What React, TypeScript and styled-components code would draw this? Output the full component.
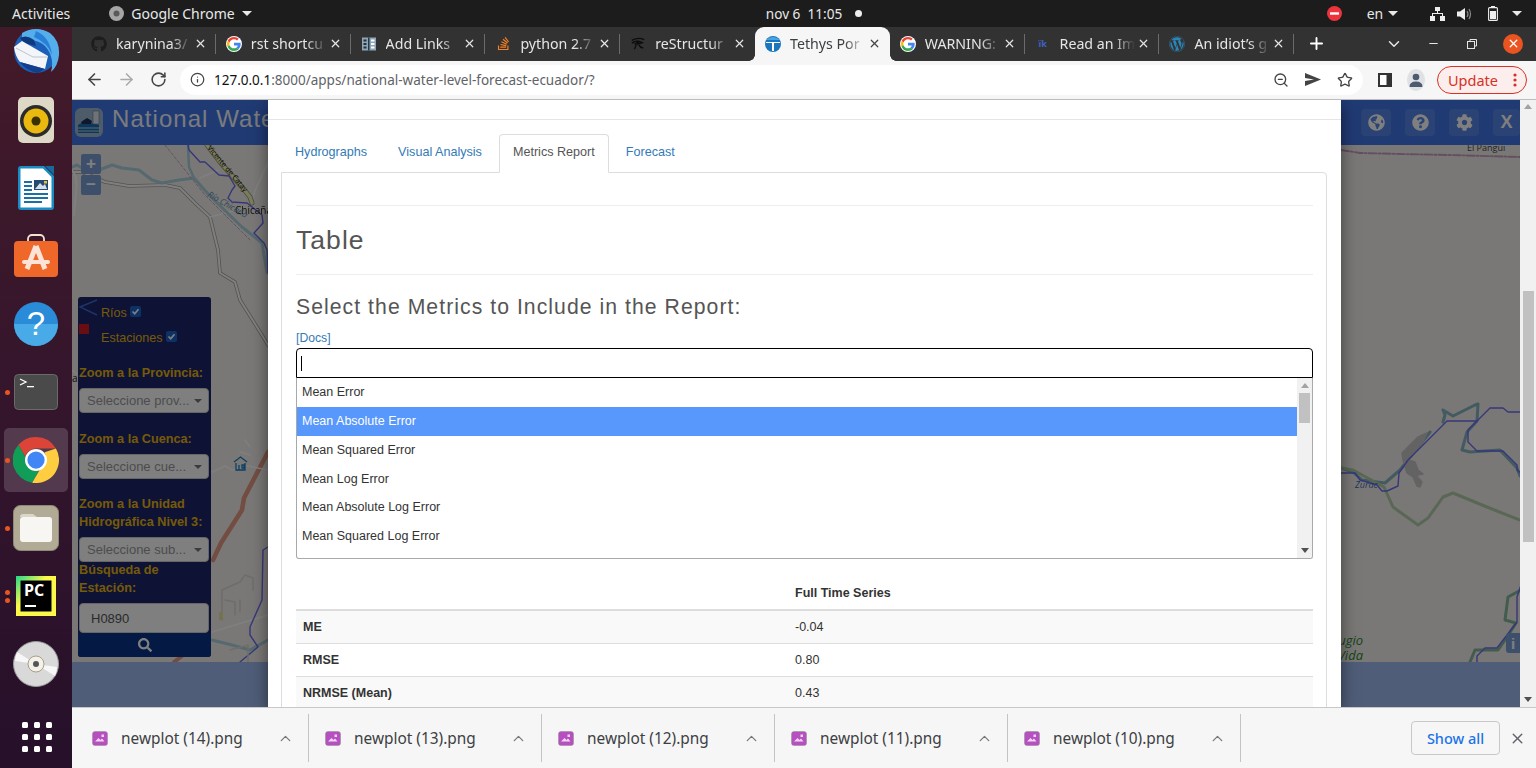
import React from "react";
import styled, { createGlobalStyle } from "styled-components";
import { ArrowLeft, ArrowRight, RotateCw, Info, ZoomOut, Star, ChevronUp, ChevronDown, X, Plus, Minus } from "lucide-react";
import { FaGithub, FaStackOverflow, FaWordpress, FaGlobeAmericas, FaQuestionCircle, FaCog, FaSearch } from "react-icons/fa";

const UI = `"Noto Sans", "Open Sans", sans-serif`;
const WEB = `"Liberation Sans", Arial, sans-serif`;

const Global = createGlobalStyle`
  html, body { margin: 0; padding: 0; overflow: hidden; background: #1c1c1c; }
  * { box-sizing: border-box; }
`;

const Screen = styled.div`
  width: 1536px; height: 768px; display: flex; flex-direction: column; overflow: hidden; font-family: ${UI};
`;

/* ---------- GNOME top bar ---------- */
const TopBar = styled.div`
  height: 27px; flex: none; background: #1c1c1c; color: #e8e8e8; display: grid;
  grid-template-columns: 1fr auto 1fr; align-items: center; font-size: 14px; padding: 0 9px 0 12px;
`;
const TopLeft = styled.div`display: flex; align-items: center;`;
const TopCenter = styled.div`display: flex; align-items: center; gap: 7px; margin-left: 89px; font-size: 13.6px;`;
const TopRight = styled.div`display: flex; align-items: center; justify-content: flex-end;`;
const AppMenu = styled.div`display: flex; align-items: center; margin-left: 39px; gap: 7px;`;
const Caret = styled.span<{ $ml?: number }>`
  display: inline-block; width: 0; height: 0; margin-left: ${p => p.$ml ?? 0}px;
  border-left: 5px solid transparent; border-right: 5px solid transparent; border-top: 5px solid #e8e8e8;
`;
const StatusDot = styled.span`width: 7px; height: 7px; border-radius: 50%; background: #eee; margin-left: 6px;`;
const TraySlot = styled.span<{ $w: number }>`display: inline-flex; width: ${p => p.$w}px; justify-content: center; align-items: center;`;

/* ---------- Dock ---------- */
const Desk = styled.div`flex: 1; display: flex; min-height: 0;`;
const Dock = styled.div`
  width: 72px; flex: none; display: flex; flex-direction: column; align-items: center;
  background: linear-gradient(180deg, #431a29 0%, #36162c 45%, #26102a 100%);
`;
const DockSlot = styled.div<{ $active?: boolean; $mt?: number }>`
  position: relative; width: 64px; height: ${p => (p.$active ? 64 : 68)}px; flex: none; display: flex; align-items: center; justify-content: center;
  margin: ${p => (p.$active ? "2px 0" : `${p.$mt ?? 0}px 0 0`)};
  border-radius: 5px; background: ${p => (p.$active ? "rgba(255,255,255,.16)" : "transparent")};
`;
const RunDot = styled.span<{ $top: number }>`
  position: absolute; left: 1px; top: ${p => p.$top}px; width: 5px; height: 5px; border-radius: 50%; background: #e95420;
`;

/* ---------- Chrome ---------- */
const Window = styled.div`flex: 1; min-width: 0; display: flex; flex-direction: column;`;
const TabStrip = styled.div`
  height: 34px; flex: none; background: #333233; display: flex; align-items: flex-end; padding-left: 9px; color: #e6e6e6;
`;
const BrowserTab = styled.div<{ $active?: boolean; $noSep?: boolean }>`
  position: relative; width: 134.800px; height: 34px; flex: none; display: flex; align-items: center; padding: 0 9px 1px 10px;
  font-size: 14.2px; border-radius: 9px 9px 0 0; background: ${p => (p.$active ? "#f6f6f6" : "transparent")};
  color: ${p => (p.$active ? "#3c4043" : "#e6e6e6")};
  &::after {
    content: ""; position: absolute; right: 0; top: 7px; height: 20px; width: 1px;
    background: ${p => (p.$noSep || p.$active ? "transparent" : "#6b6b6b")};
  }
`;
const TabFlare = styled.span<{ $side: "left" | "right" }>`
  position: absolute; bottom: 0; ${p => p.$side}: -6px; width: 6px; height: 6px;
  background: radial-gradient(circle at ${p => (p.$side === "left" ? "0 0" : "100% 0")}, transparent 5.500px, #f6f6f6 6px);
`;
const TabIcon = styled.span`width: 16px; height: 16px; flex: none; display: flex; align-items: center; justify-content: center; margin-right: 9px;`;
const TabTitle = styled.span`
  flex: 1; min-width: 0; overflow: hidden; white-space: nowrap;
  mask-image: linear-gradient(90deg, #000 72%, transparent 100%);
`;
const TabClose = styled.span`flex: none; display: flex; margin-left: 2px;`;
const StripControls = styled.div`flex: 1; display: flex; align-items: center; height: 34px; padding-bottom: 1px;`;
const StripSlot = styled.span<{ $w: number }>`width: ${p => p.$w}px; flex: none; display: flex; justify-content: center; align-items: center;`;
const CloseRound = styled.span`
  width: 20px; height: 20px; border-radius: 50%; background: #e95420; display: flex; align-items: center; justify-content: center;
`;

const Toolbar = styled.div`
  height: 39px; flex: none; background: #f6f6f6; border-bottom: 1px solid #bdbdbd; display: flex; align-items: center; padding: 0 9px 1px 0;
`;
const NavSlot = styled.span`width: 32px; display: flex; justify-content: center; align-items: center; flex: none;`;
const NavGroup = styled.div`display: flex; padding-left: 6px; width: 108px; flex: none;`;
const Omnibox = styled.div`
  width: 1183px; height: 30px; flex: none; border-radius: 15px; background: #fff; display: flex; align-items: center; padding: 0 2px 0 10px;
  font-size: 13.5px; color: #5f6368;
`;
const UrlHost = styled.span`color: #111;`;
const UrlText = styled.span`margin-left: 9px; flex: 1; white-space: nowrap;`;
const OmniSlot = styled.span`width: 32px; display: flex; justify-content: center; flex: none;`;
const Avatar = styled.span`
  width: 22px; height: 22px; border-radius: 50%; background: #dfe1e5; display: flex; align-items: center; justify-content: center; overflow: hidden;
`;
const UpdatePill = styled.div`
  width: 91px; height: 28px; border-radius: 14px; border: 1px solid #d93025; background: #fbeeed; color: #d93025;
  display: flex; align-items: center; justify-content: space-between; padding: 0 9px 0 10px; font-size: 14.5px;
`;
const ToolSlot = styled.span<{ $w: number }>`width: ${p => p.$w}px; flex: none; display: flex; justify-content: center;`;
const ToolGap = styled.span`width: 12px; flex: none;`;

/* ---------- Viewport ---------- */
const Viewport = styled.div`flex: 1; min-height: 0; display: flex;`;
const Page = styled.div`position: relative; flex: 1; min-width: 0; display: flex; flex-direction: column; overflow: hidden; font-family: ${WEB};`;
const AppHeader = styled.div`
  height: 45px; flex: none; background: #4075e6; display: flex; align-items: center; color: #fff; padding-left: 3px;
`;
const AppTitle = styled.div`font-size: 24px; letter-spacing: 1.05px; margin: -8px 0 0 9px; flex: 1; white-space: nowrap; color: #f4f6fb;`;
const HeaderButtons = styled.div`display: flex; gap: 14px;`;
const HeaderButton = styled.div<{ $w?: number }>`
  width: ${p => p.$w ?? 30}px; height: 27px; border-radius: 4px; background: rgba(255,255,255,.12); display: flex; align-items: center; justify-content: center;
  color: #fff; font-size: 18px; font-weight: bold;
`;
const MapArea = styled.div`position: relative; height: 517px; flex: none; background: #f4f1ec; overflow: hidden;`;
const MapSvg = styled.svg`display: block; width: 100%; height: 100%;`;
const AppFooter = styled.div`flex: 1; background: #9fbaf0;`;
const ZoomControl = styled.div`position: absolute; left: 9px; top: 9px; width: 20px; display: flex; flex-direction: column; gap: 1px;`;
const ZoomBtn = styled.div`
  height: 20px; background: #7c9fd8; color: #fff; font-size: 17px; font-weight: bold; display: flex; align-items: center; justify-content: center;
  border-radius: 2px;
`;
const InfoBtn = styled.div`
  position: absolute; right: 0; top: 488px; width: 14px; height: 20px; background: #7c9fd8; color: #fff; font-size: 15px; font-weight: bold;
  border-radius: 3px 0 0 3px; display: flex; align-items: center; justify-content: center;
`;

/* legend */
const Legend = styled.div`
  position: absolute; left: 6px; top: 152px; width: 133px; height: 360px; background: #1c2468; border-radius: 3px; padding: 3px 1px 0;
  display: flex; flex-direction: column; overflow: hidden; color: #e8b512;
`;
const LegendRow = styled.div`display: flex; align-items: center; height: 25px; font-size: 12.6px;`;
const LegendSwatch = styled.span`width: 22px; flex: none; display: flex; align-items: flex-start; height: 25px; margin-top: -2px;`;
const LegendName = styled.span`margin: 0 3px 0 0;`;
const Check = styled.span`
  width: 11px; height: 11px; background: #1a63c9; border-radius: 2px; display: inline-flex; align-items: center; justify-content: center; margin-top: -3px;
`;
const FieldLabel = styled.div<{ $mt: number }>`
  font-size: 12.7px; font-weight: bold; line-height: 18px; margin-top: ${p => p.$mt}px; color: #e8b512;
`;
const FakeSelect = styled.div<{ $mt: number }>`
  width: 130px; height: 25px; margin-top: ${p => p.$mt}px; flex: none; background: #fff; border: 1px solid #ccc; border-radius: 4px; color: #999; font-size: 13px;
  display: flex; align-items: center; justify-content: space-between; padding: 0 6px 0 7px;
`;
const SelectCaret = styled.span`
  width: 0; height: 0; border-left: 4px solid transparent; border-right: 4px solid transparent; border-top: 4px solid #777;
`;
const StationInput = styled.div`
  width: 130px; height: 30px; margin-top: 6px; flex: none; background: #fff; border-radius: 4px; border: 1px solid #ccc; color: #555; font-size: 13px;
  display: flex; align-items: center; padding-left: 11px;
`;
const SearchBar = styled.div`
  flex: 1; margin: 0 -1px; background: #08358a; display: flex; align-items: center; justify-content: center; color: #fff;
`;

const Backdrop = styled.div`position: absolute; inset: 0; background: rgba(0,0,0,.5);`;

/* ---------- modal ---------- */
const Modal = styled.div`
  position: absolute; left: 196px; top: 0; bottom: 0; width: 1073px; background: #fff; box-shadow: 0 5px 15px rgba(0,0,0,.5);
  overflow: hidden; color: #333; font-size: 13px;
`;
const ModalTop = styled.div`height: 20px; border-bottom: 1px solid #e5e5e5;`;
const ModalBody = styled.div`padding: 14px 14px 0 13px;`;
const NavTabs = styled.div`display: flex; height: 38px; position: relative; z-index: 1;`;
const NavTab = styled.div<{ $active?: boolean }>`
  height: ${p => (p.$active ? 39 : 38)}px; padding: 0 13px ${p => (p.$active ? 3 : 2)}px; margin-right: 3px; display: flex; align-items: center; font-size: 12.6px; border-radius: 4px 4px 0 0;
  border: 1px solid ${p => (p.$active ? "#ddd" : "transparent")}; border-bottom-color: ${p => (p.$active ? "#fff" : "transparent")};
  background: ${p => (p.$active ? "#fff" : "transparent")};
  color: ${p => (p.$active ? "#555" : "#337ab7")};
`;
const TabPanel = styled.div`border: 1px solid #ddd; border-radius: 0 4px 0 0; padding: 0 13px 0 14px; width: 1046px; height: 560px;`;
const Rule = styled.div<{ $mt: number }>`height: 1px; background: #eee; margin-top: ${p => p.$mt}px;`;
const TableTitle = styled.h2`
  margin: 17px 0 16px; font-size: 26.500px; line-height: 35px; font-weight: 400; letter-spacing: 1.05px; color: #555;
`;
const SubTitle = styled.h3`
  margin: 20px 0 0; font-size: 21.200px; line-height: 24px; font-weight: 400; letter-spacing: 1.05px; color: #555;
`;
const DocsLink = styled.div`margin-top: 12px; height: 17px; font-size: 12.2px; line-height: 15px; color: #337ab7;`;
const MultiInput = styled.div`
  height: 30px; border: 1.5px solid #000; border-radius: 4px 4px 0 0; display: flex; align-items: center; padding-left: 4px; background: #fff;
`;
const TextCaret = styled.span`width: 1px; height: 15px; background: #000;`;
const ListBox = styled.div`
  height: 181px; border: 1px solid #a9a9a9; border-top: none; border-radius: 0 0 3px 3px; display: flex; overflow: hidden;
`;
const Options = styled.div`flex: 1; min-width: 0;`;
const OptionRow = styled.div<{ $hl?: boolean }>`
  height: ${p => (p.$hl ? 29 : 28.700)}px; display: flex; align-items: center; padding-left: 5px; font-size: 12.5px;
  background: ${p => (p.$hl ? "#5897fb" : "transparent")}; color: ${p => (p.$hl ? "#fff" : "#333")};
`;
const ScrollTrack = styled.div<{ $w: number }>`
  width: ${p => p.$w}px; flex: none; background: #f1f1f1; display: flex; flex-direction: column; align-items: center;
`;
const ArrowUp = styled.span<{ $mt: number }>`
  width: 0; height: 0; margin-top: ${p => p.$mt}px; border-left: 4px solid transparent; border-right: 4px solid transparent; border-bottom: 5px solid #a3a3a3; flex: none;
`;
const ArrowDown = styled.span<{ $mb: number }>`
  width: 0; height: 0; margin-top: auto; margin-bottom: ${p => p.$mb}px; border-left: 4px solid transparent; border-right: 4px solid transparent; border-top: 5px solid #505050; flex: none;
`;
const Thumb = styled.span<{ $w: number; $h: number; $mt: number }>`
  width: ${p => p.$w}px; height: ${p => p.$h}px; margin-top: ${p => p.$mt}px; background: #c1c1c1; flex: none;
`;
const Metrics = styled.table`
  width: 100%; border-collapse: collapse; margin-top: 17px; font-size: 12.5px; color: #333; table-layout: fixed;
`;
const HeadCell = styled.th`
  text-align: left; padding: 0 7px; height: 34px; font-weight: bold; border-bottom: 2px solid #ddd;
`;
const Row = styled.tr<{ $odd?: boolean }>`background: ${p => (p.$odd ? "#f9f9f9" : "#fff")};`;
const LabelCell = styled.td`padding: 0 7px; height: 33px; font-weight: bold; border-bottom: 1px solid #ddd;`;
const ValueCell = styled.td`padding: 0 7px; height: 33px; border-bottom: 1px solid #ddd;`;

/* ---------- downloads ---------- */
const DownloadBar = styled.div`
  height: 61px; flex: none; background: #f6f6f6; border-top: 1px solid #c8c8c8; display: flex; align-items: center; padding-left: 4px;
`;
const DownloadItem = styled.div`
  width: 233px; height: 48px; flex: none; border-right: 1px solid #c4c4c4; display: flex; align-items: center; padding-left: 16px; font-size: 15.4px; color: #3c4043;
`;
const FileName = styled.span`margin-left: 13px; flex: 1; white-space: nowrap;`;
const DownloadChevron = styled.span`display: flex; margin-right: 14px;`;
const ShowAll = styled.div`
  margin-left: auto; width: 89px; height: 34px; border: 1px solid #c8c8c8; border-radius: 4px; color: #1a73e8; font-size: 14.5px; font-weight: 500;
  display: flex; align-items: center; justify-content: center;
`;
const BarClose = styled.span`width: 36px; display: flex; justify-content: center; flex: none; padding-right: 1px;`;

/* ---------- icons ---------- */
const GoogleG = () => (
  <svg width="16" height="16" viewBox="0 0 48 48">
    <circle cx="24" cy="24" r="24" fill="#fff" />
    <path fill="#EA4335" d="M24 10c3.600 0 6.600 1.300 9 3.500l5-5C34.800 5.400 29.800 3 24 3 15.500 3 8.300 7.800 4.800 14.900l5.900 4.600C12.300 14 17.700 10 24 10z" />
    <path fill="#4285F4" d="M44 24.500c0-1.500-.1-2.600-.4-4H24v8h11.300c-.5 2.700-2 5-4.300 6.500l5.700 4.400C41.500 36 44 30.800 44 24.500z" />
    <path fill="#FBBC05" d="M10.700 28.500A12.600 12.600 0 0 1 10 24c0-1.600.3-3.100.7-4.500l-5.900-4.600A21 21 0 0 0 3 24c0 3.300.8 6.400 1.800 9.100l5.900-4.600z" />
    <path fill="#34A853" d="M24 45c5.700 0 10.500-1.900 14-5.100L31 35c-1.800 1.300-4.100 2-7 2-6.300 0-11.700-4-13.300-9.500l-5.900 4.600C8.300 40.200 15.500 45 24 45z" />
  </svg>
);
const BookIcon = () => (
  <svg width="16" height="16" viewBox="0 0 16 16">
    <rect x="1" y="1.500" width="14" height="13" fill="#8fa6b8" />
    <rect x="7" y="1.500" width="1.500" height="13" fill="#22394a" />
    <rect x="2.500" y="3.500" width="3" height="2" fill="#25323c" /><rect x="2.500" y="7" width="3" height="2" fill="#25323c" /><rect x="2.500" y="10.500" width="3" height="2" fill="#25323c" />
    <rect x="10" y="3.500" width="3.500" height="2" fill="#fff" /><rect x="10" y="7" width="3.500" height="2" fill="#fff" /><rect x="10" y="10.500" width="3.500" height="2" fill="#fff" />
  </svg>
);
const HorusIcon = () => (
  <svg width="18" height="14" viewBox="0 0 18 14" fill="none" stroke="#0d0d0d" strokeWidth="1.500">
    <path d="M2 3 Q9 -1 16 2" /><path d="M2 6 Q8 2 14 5.500 Q9 8 5 6.500" /><path d="M7 8 L5 13" /><path d="M10 8 Q12 12 15 11" />
    <circle cx="9" cy="5" r="1.200" fill="#0d0d0d" />
  </svg>
);
const TethysIcon = () => (
  <svg width="16" height="16" viewBox="0 0 16 16">
    <circle cx="8" cy="8" r="8" fill="#1b76bb" />
    <path d="M1 6 H15 V7 H9 V15 H7 V7 H1 Z" fill="#fff" />
    <path d="M2 3 Q8 -1 14 3 L14 4 H2Z" fill="#4aa3df" />
  </svg>
);
const ChromeIcon = ({ s }: { s: number }) => (
  <svg width={s} height={s} viewBox="0 0 48 48">
    <path fill="#db4437" d="M24 0a24 24 0 0 1 20.800 12H24a12 12 0 0 0-11.400 8.300L5.600 8.100A24 24 0 0 1 24 0z" />
    <path fill="#0f9d58" d="M5.600 8.100 L16.500 27 A12 12 0 0 0 27 35.600 L20 47.700 A24 24 0 0 1 5.600 8.100z" />
    <path fill="#ffcd40" d="M44.800 12 A24 24 0 0 1 20 47.700 L31 29 A12 12 0 0 0 33 16 Z" />
    <circle cx="24" cy="24" r="11.500" fill="#fff" /><circle cx="24" cy="24" r="9" fill="#4285f4" />
  </svg>
);
const FileIcon = () => (
  <svg width="16" height="15" viewBox="0 0 16 15">
    <rect x=".5" y=".5" width="15" height="14" rx="2.500" fill="#b64fc0" stroke="#8c8c8c" strokeWidth=".5" />
    <path d="M3 10.500 L6.500 7 L8.500 9 L10 7.500 L12.500 10.500Z" fill="#f2d7f5" /><rect x="9.500" y="3.500" width="2.500" height="2.500" fill="#f2d7f5" />
  </svg>
);
const CheckMark = () => (
  <svg width="9" height="9" viewBox="0 0 9 9"><path d="M1.500 4.500 L3.700 6.800 L7.500 2.200" fill="none" stroke="#fff" strokeWidth="1.700" /></svg>
);
const Thunderbird = () => (
  <svg width="48" height="46" viewBox="0 0 48 46">
    <circle cx="24" cy="22" r="22" fill="#1b5fb8" />
    <path d="M10 4 Q24 -4 38 4 Q48 12 47 26 Q46 37 39 43 Q43 28 33 17 Q25 9 10 12Z" fill="#55aeec" />
    <path d="M24 2 Q38 8 40 26 Q36 14 22 8Z" fill="#2a7fd6" />
    <path d="M8 9 Q15 5 22 11 L24 17 L12 14Z" fill="#0d3a7e" />
    <path d="M2 18 L10 12 L36 27 L33 40 L8 33 Q3 27 2 18Z" fill="#f4f5f8" />
    <path d="M4 19 L21 28 L35 28" fill="none" stroke="#bcc3d1" strokeWidth="1" />
    <path d="M8 33 L33 40 L26 44 Q14 42 8 33Z" fill="#123f8c" />
  </svg>
);
const Rhythmbox = () => (
  <svg width="36" height="46" viewBox="0 0 36 46">
    <rect x="0" y="0" width="36" height="46" rx="5" fill="#ded9c6" /><circle cx="18" cy="24" r="16" fill="#2b2b2b" /><circle cx="18" cy="24" r="12.500" fill="#e9b90f" /><circle cx="18" cy="24" r="4.500" fill="#3a3000" />
  </svg>
);
const Writer = () => (
  <svg width="38" height="46" viewBox="0 0 38 46">
    <path d="M4 1 H27 L37 11 V42 a3 3 0 0 1-3 3 H4 a3 3 0 0 1-3-3 V4 a3 3 0 0 1 3-3z" fill="#1a8cc4" />
    <path d="M3.500 3.500 H26 L34.500 12 V42.500 H3.500Z" fill="#fff" />
    <path d="M28 1 L37 1 L37 10Z" fill="#146b9c" />
    <g fill="#1a6fa6"><rect x="7" y="16" width="8" height="2" /><rect x="7" y="20" width="8" height="2" /><rect x="7" y="24" width="8" height="2" /><rect x="7" y="28" width="24" height="2" /><rect x="7" y="32" width="24" height="2" /><rect x="7" y="36" width="18" height="2" /></g>
    <rect x="17" y="15" width="14" height="10" fill="#244b70" /><path d="M18 24 L23 18 L26 21 L28 19 L30 24Z" fill="#d8dfe6" /><rect x="27" y="16" width="3" height="2.500" fill="#f0c030" />
  </svg>
);
const Software = () => (
  <svg width="46" height="44" viewBox="0 0 46 44">
    <path d="M15 10 V5 a4 4 0 0 1 4-4 h8 a4 4 0 0 1 4 4 V10" fill="none" stroke="#f1e5cf" strokeWidth="1.800" />
    <rect x="1" y="7" width="44" height="36" rx="4" fill="#f0672a" />
    <path d="M23 12 L14 35 M23 12 L32 35" stroke="#fbe3d8" strokeWidth="5" />
    <rect x="9" y="26" width="28" height="4" rx="2" fill="#fbe3d8" />
  </svg>
);
const HelpIcon = () => (
  <svg width="46" height="46" viewBox="0 0 46 46">
    <circle cx="23" cy="23" r="22" fill="#2a8bd8" /><path d="M1 23a22 22 0 0 0 44 0Z" fill="#49aae8" />
    <text x="23" y="34" textAnchor="middle" fontSize="33" fontFamily="Liberation Sans" fill="#fff">?</text>
  </svg>
);
const Terminal = () => (
  <svg width="44" height="36" viewBox="0 0 44 36">
    <rect x=".5" y=".5" width="43" height="35" rx="4" fill="#4a4a4a" stroke="#6a6a6a" />
    <path d="M6 5 L12 8 L6 11" fill="none" stroke="#fff" strokeWidth="1.300" /><rect x="13" y="12" width="7" height="1.300" fill="#fff" />
  </svg>
);
const Files = () => (
  <svg width="46" height="46" viewBox="0 0 46 46">
    <rect x=".5" y=".5" width="45" height="45" rx="7" fill="#b1ab96" stroke="#8d8877" />
    <path d="M7 12 a3 3 0 0 1 3-3 H20 L24 12 Z" fill="#dad6c9" />
    <rect x="7" y="12" width="32" height="25" rx="3" fill="#f7f6f3" />
  </svg>
);
const PyCharm = () => (
  <svg width="40" height="40" viewBox="0 0 40 40">
    <defs><linearGradient id="pc" x1="0" y1="0" x2="1" y2="1"><stop offset="0" stopColor="#21d789" /><stop offset=".4" stopColor="#fcf84a" /><stop offset="1" stopColor="#fcf84a" /></linearGradient></defs>
    <rect width="40" height="40" fill="url(#pc)" /><rect x="4.500" y="4.500" width="31" height="31" fill="#000" />
    <text x="8" y="20" fontFamily="Open Sans" fontWeight="700" fontSize="16" fill="#fff">PC</text>
    <rect x="9" y="29" width="11" height="2" fill="#fff" />
  </svg>
);
const Disc = () => (
  <svg width="46" height="46" viewBox="0 0 46 46">
    <circle cx="23" cy="23" r="22.500" fill="#d9d9d9" stroke="#9a9a9a" />
    <path d="M23 23 L4 11 A22 22 0 0 0 2 20Z M23 23 L42 35 A22 22 0 0 0 44 26Z" fill="#f7f7f7" />
    <circle cx="23" cy="23" r="8" fill="#f3f1e9" stroke="#a79f88" /><circle cx="23" cy="23" r="3" fill="#555" />
  </svg>
);
const AppGrid = () => (
  <svg width="32" height="32" viewBox="0 0 32 32" fill="#fff">
    {[2, 14, 26].flatMap(y => [2, 14, 26].map(x => <rect key={`${x}-${y}`} x={x} y={y} width="6" height="6" rx="1.500" />))}
  </svg>
);
const NoEntry = () => (
  <svg width="15" height="15" viewBox="0 0 15 15"><circle cx="7.500" cy="7.500" r="7.500" fill="#ed333b" /><rect x="3" y="6.300" width="9" height="2.400" fill="#fff" /></svg>
);
const Network = () => (
  <svg width="15" height="14" viewBox="0 0 15 14" fill="#eee"><rect x="5" y="0" width="5" height="4" /><rect x="0" y="9" width="5" height="5" /><rect x="10" y="9" width="5" height="5" /><path d="M7 4 h1 v2 h5 v3 h-1 v-2 H3 v2 H2 V6 h5Z" /></svg>
);
const Volume = () => (
  <svg width="16" height="14" viewBox="0 0 16 14"><path d="M0 4.500 H3 L8 1 V13 L3 9.500 H0Z" fill="#eee" /><path d="M10 4 Q12 7 10 10 M12 2 Q15 7 12 12" fill="none" stroke="#8a8a8a" strokeWidth="1.200" /></svg>
);
const Battery = () => (
  <svg width="10" height="15" viewBox="0 0 10 15"><rect x="3" y="0" width="4" height="2" fill="#eee" /><rect x=".6" y="1.600" width="8.800" height="12.800" rx="1" fill="none" stroke="#eee" strokeWidth="1.100" /><rect x="2" y="5" width="6" height="8" fill="#eee" /></svg>
);
const TinyMark = styled.span`font-size: 9px; color: #3f62c0; font-weight: 700;`;

const tabs = [
  { t: "karynina3/", i: <FaGithub size={16} color="#1d1d1d" /> },
  { t: "rst shortcu", i: <GoogleG /> },
  { t: "Add Links", i: <BookIcon /> },
  { t: "python 2.7", i: <FaStackOverflow size={15} color="#f48024" /> },
  { t: "reStructur", i: <HorusIcon />, noSep: true },
  { t: "Tethys Por", i: <TethysIcon />, active: true },
  { t: "WARNING:", i: <GoogleG /> },
  { t: "Read an Im", i: <TinyMark>ïk</TinyMark> },
  { t: "An idiot’s g", i: <FaWordpress size={16} color="#2a86b8" /> },
];

const Map = () => (
  <MapSvg viewBox="72 145 1448 517" fill="none">
    {/* left */}
    <g strokeLinejoin="round" strokeLinecap="round">
      <path d="M72 172 L82 172 L105 182 L129 186 L165 185 L180 188 L195 203 L210 217 L218 250 L220 273 L235 282 L240 300 L262 335 L268 345" stroke="#a9a6a0" strokeWidth="3.600" />
      <path d="M72 172 L82 172 L105 182 L129 186 L165 185 L180 188 L195 203 L210 217 L218 250 L220 273 L235 282 L240 300 L262 335 L268 345" stroke="#fff" strokeWidth="2" />
      <path d="M210 217 L245 208 M268 163 L256 188 L252 200 M200 178 L218 170" stroke="#fff" strokeWidth="1.600" />
      <path d="M72 170 Q78 178 76 192 L74 215" stroke="#fff" strokeWidth="2" />
      <path d="M207 145 L220 162 L242 187 L250 197 L252 203" stroke="#9b9a70" strokeWidth="5" />
      <path d="M207 145 L220 162 L242 187 L250 197 L252 203" stroke="#f7fabf" strokeWidth="3.400" />
      <path d="M72 167 L77 165 L82 168 L99 170 L112 165 L122 168 L139 170 L152 180 L162 183 L179 180 L194 178 L209 195 L242 227 L262 243 L267 273" stroke="#aad3df" strokeWidth="3" />
      <path d="M188 145 L189 167 L194 178" stroke="#aad3df" strokeWidth="2.600" />
      <path d="M188 145 L189 150 L200 162 L205 162 L219 175 L229 176 L235 186 L232 190 L228 198 L232 202 L247 203 L262 215 L263 223 L254 233 L264 243 L267 250 L268 273" stroke="#6c6cf4" strokeWidth="1.400" />
      <path d="M165 145 L205 195 L225 215 L250 240" stroke="#c8a8c0" strokeWidth="1" strokeDasharray="3 2" />
      <path d="M213 560 L221 543 L242 510 L244 498 L268 452" stroke="#e79a84" strokeWidth="4.600" />
      <path d="M174 662 L182 656" stroke="#e79a84" strokeWidth="4" />
      <path d="M212 472 L225 466 L232 470 L248 466 L268 470" stroke="#fff" strokeWidth="1.600" />
      <path d="M212 640 L232 645 L250 650 L268 640" stroke="#aad3df" strokeWidth="3" />
      <path d="M212 632 L268 615" stroke="#fff" strokeWidth="1.600" />
      <path d="M268 547 L263 550 L262 600 L250 627 L250 635 L258 647 L240 662" stroke="#6c6cf4" strokeWidth="1.400" />
      <path d="M222 620 V590 L240 582 L245 575 L253 578 V590 M225 600 L235 602 V615 M240 600 V612 M230 650 L248 645 L248 662" stroke="#dcdad4" strokeWidth="1.600" />
      <rect x="219" y="612" width="4" height="8" fill="#e8e7a0" stroke="none" />
      <path d="M72 370 l5 4 M245 440 L250 447 M240 452 L250 455" stroke="#fff" strokeWidth="1.400" />
    </g>
    <text x="235" y="214" fontFamily="Open Sans" fontSize="10" fill="#000" opacity=".9">Chicaña</text>
    <text x="207" y="148" fontFamily="Open Sans" fontSize="7.500" fill="#111" transform="rotate(50 207 148)">Vicente de Catay</text>
    <text x="207" y="196" fontFamily="Open Sans" fontSize="8.500" fontStyle="italic" fill="#5d8fb0" transform="rotate(30 207 196)">Río Chicaña</text>
    <text x="72" y="382" fontFamily="Open Sans" fontSize="10" fill="#222">a</text>
    <g transform="translate(234 456)" stroke="#1a7fc0" strokeWidth="1.300"><path d="M0 6 L6.500 1 L13 6" /><path d="M2 7 V14 H11 V7 M5 9 V14 M8 9 H10 V12 H8Z" /></g>

    {/* right */}
    <g strokeLinejoin="round" strokeLinecap="round">
      <path d="M1341 150 L1360 153 L1400 154 L1450 155 L1520 157" stroke="#c49fc0" strokeWidth="1.900" strokeDasharray="8 2 2 2" />
      <path d="M1341 468 L1353 472 L1362 480 L1385 483 L1400 470 L1430 432 M1443 422 L1445 415 L1443 410 L1453 416 L1465 410 L1475 405 L1478 404 L1477 421 L1467 432 L1462 450 L1470 452 L1500 450 L1517 468 L1520 476" stroke="#86b4c2" strokeWidth="3" />
      <path d="M1402 453 L1418 437 L1427 433 L1423 442 L1408 460 L1415 462 L1418 470 L1423 474 L1418 475 L1414 473 L1422 482 L1420 487 L1417 486 L1413 477 L1407 473 L1403 460Z" fill="#c6c6c6" stroke="#c6c6c6" strokeWidth="1.500" />
      <path d="M1341 468 L1353 470 L1384 487 L1393 507 L1418 525 L1428 518 L1443 497 L1453 493 L1487 507 L1520 520" stroke="#b2ceaa" strokeWidth="3" />
      <path d="M1341 473 H1355 L1360 480 L1377 485 L1382 491 L1387 491 L1398 486 L1399 473 L1408 460 L1447 421 H1477 L1490 408 H1503 L1508 412 H1521" stroke="#6c6cf4" strokeWidth="1.400" />
      <path d="M1477 421 L1468 430 V442 L1477 451 H1503 L1517 465 V470 L1521 473" stroke="#6c6cf4" strokeWidth="1.400" />
      <path d="M1521 590 L1508 597 L1505 620 L1516 623 L1505 640 L1498 650 L1475 650 L1470 662" stroke="#84b89a" strokeWidth="3" />
      <path d="M1521 585 L1517 597 V622 L1497 648 H1485 L1477 656 V662" stroke="#6c6cf4" strokeWidth="1.400" />
    </g>
    <text x="1467" y="151" fontFamily="Open Sans" fontSize="9" fill="#444">El Pangui</text>
    <text x="1355" y="488" fontFamily="Open Sans" fontSize="9" fontStyle="italic" fill="#3f6db0">Zurac</text>
    <text x="1363" y="645" textAnchor="end" fontFamily="Open Sans" fontSize="13" fontStyle="italic" fill="#2c8a2c">Refugio</text>
    <text x="1363" y="660" textAnchor="end" fontFamily="Open Sans" fontSize="13" fontStyle="italic" fill="#2c8a2c">de Vida</text>
  </MapSvg>
);

const Logo = () => (
  <svg width="28" height="29" viewBox="0 0 28 29">
    <rect width="28" height="29" rx="6" fill="#9db6d2" />
    <path d="M3 17 Q8 13 13 16 L19 15 L24 17 V25 H3Z" fill="#1c6db2" />
    <path d="M6 14 L12 10 L17 13 L16 16 H7Z" fill="#1a2f5c" />
    <rect x="18" y="3" width="6" height="13" fill="#dfe6ef" stroke="#5c7fa8" strokeWidth=".6" />
    <path d="M3 20 H25 M3 23 H25" stroke="#e6eef6" strokeWidth=".8" />
  </svg>
);

export default function App() {
  return (
    <Screen>
      <Global />
      <TopBar>
        <TopLeft>
          Activities
          <AppMenu>
            <svg width="15" height="15" viewBox="0 0 15 15"><circle cx="7.500" cy="7.500" r="7.500" fill="#a6a6a6" /><circle cx="7.500" cy="7.500" r="3" fill="#5a5a5a" /></svg>
            Google Chrome<Caret $ml={0} />
          </AppMenu>
        </TopLeft>
        <TopCenter>
          <span>nov 6&nbsp; 11:05</span><StatusDot />
        </TopCenter>
        <TopRight>
          <NoEntry />
          <TraySlot $w={81}>en<Caret $ml={5} /></TraySlot>
          <TraySlot $w={28}><Network /></TraySlot>
          <TraySlot $w={28}><Volume /></TraySlot>
          <TraySlot $w={28}><Battery /></TraySlot>
          <TraySlot $w={20}><Caret /></TraySlot>
        </TopRight>
      </TopBar>
      <Desk>
        <Dock>
          <DockSlot $mt={-9}><Thunderbird /></DockSlot>
          <DockSlot><Rhythmbox /></DockSlot>
          <DockSlot><Writer /></DockSlot>
          <DockSlot><Software /></DockSlot>
          <DockSlot><HelpIcon /></DockSlot>
          <DockSlot><RunDot $top={32} /><Terminal /></DockSlot>
          <DockSlot $active><RunDot $top={30} /><ChromeIcon s={46} /></DockSlot>
          <DockSlot><RunDot $top={32} /><Files /></DockSlot>
          <DockSlot><RunDot $top={28} /><RunDot $top={36} /><PyCharm /></DockSlot>
          <DockSlot><Disc /></DockSlot>
          <DockSlot $mt={4}><AppGrid /></DockSlot>
        </Dock>
        <Window>
          <TabStrip>
            {tabs.map(t => (
              <BrowserTab key={t.t} $active={t.active} $noSep={t.noSep}>
                {t.active && <TabFlare $side="left" />}
                {t.active && <TabFlare $side="right" />}
                <TabIcon>{t.i}</TabIcon>
                <TabTitle>{t.t}</TabTitle>
                <TabClose><X size={13} strokeWidth={2.200} color={t.active ? "#444" : "#e6e6e6"} /></TabClose>
              </BrowserTab>
            ))}
            <StripControls>
              <StripSlot $w={44}><Plus size={19} strokeWidth={2.400} color="#fff" /></StripSlot>
              <StripSlot $w={38} />
              <StripSlot $w={36}><ChevronDown size={18} color="#e6e6e6" /></StripSlot>
              <StripSlot $w={42}><Minus size={13} color="#e6e6e6" /></StripSlot>
              <StripSlot $w={36}>
                <svg width="10" height="10" viewBox="0 0 10 10" fill="none" stroke="#e6e6e6"><rect x=".5" y="2.500" width="7" height="7" /><path d="M3 2.500 V.5 H9.500 V7 H7.500" /></svg>
              </StripSlot>
              <StripSlot $w={46}><CloseRound><X size={13} strokeWidth={2.400} color="#fff" /></CloseRound></StripSlot>
            </StripControls>
          </TabStrip>
          <Toolbar>
            <NavGroup>
              <NavSlot><ArrowLeft size={19} strokeWidth={2} color="#444" /></NavSlot>
              <NavSlot><ArrowRight size={19} strokeWidth={2} color="#aaa" /></NavSlot>
              <NavSlot><RotateCw size={17} strokeWidth={2.200} color="#444" /></NavSlot>
            </NavGroup>
            <Omnibox>
              <Info size={15} strokeWidth={2} color="#444" />
              <UrlText><UrlHost>127.0.0.1</UrlHost>:8000/apps/national-water-level-forecast-ecuador/?</UrlText>
              <OmniSlot><ZoomOut size={16} strokeWidth={2} color="#444" /></OmniSlot>
              <OmniSlot>
                <svg width="16" height="13" viewBox="0 0 16 13"><path d="M0 0 L16 6.500 L0 13 L0 8 L9 6.500 L0 5Z" fill="#444" /></svg>
              </OmniSlot>
              <OmniSlot><Star size={16} strokeWidth={2} color="#444" /></OmniSlot>
            </Omnibox>
            <ToolSlot $w={44}>
              <svg width="14" height="14" viewBox="0 0 14 14"><rect x="1" y="1" width="12" height="12" fill="#fff" stroke="#333" strokeWidth="2" /><rect x="8.500" y="1" width="5" height="12" fill="#333" /></svg>
            </ToolSlot>
            <ToolSlot $w={18}><Avatar>
              <svg width="16" height="16" viewBox="0 0 16 16" fill="#4c5a70"><circle cx="8" cy="5" r="3.300" /><path d="M1.500 15 Q1.500 9.500 8 9.500 Q14.500 9.500 14.500 15Z" /></svg>
            </Avatar></ToolSlot>
            <ToolGap />
            <UpdatePill>Update
              <svg width="4" height="14" viewBox="0 0 4 14" fill="#d93025"><circle cx="2" cy="2" r="1.600" /><circle cx="2" cy="7" r="1.600" /><circle cx="2" cy="12" r="1.600" /></svg>
            </UpdatePill>
          </Toolbar>
          <Viewport>
            <Page>
              <AppHeader>
                <Logo />
                <AppTitle>National Water Level Forecast Ecuador</AppTitle>
                <HeaderButtons>
                  <HeaderButton><FaGlobeAmericas size={17} /></HeaderButton>
                  <HeaderButton><FaQuestionCircle size={17} /></HeaderButton>
                  <HeaderButton><FaCog size={17} /></HeaderButton>
                  <HeaderButton $w={27}>X</HeaderButton>
                </HeaderButtons>
              </AppHeader>
              <MapArea>
                <Map />
                <ZoomControl>
                  <ZoomBtn>+</ZoomBtn>
                  <ZoomBtn>−</ZoomBtn>
                </ZoomControl>
                <InfoBtn>i</InfoBtn>
                <Legend>
                  <LegendRow>
                    <LegendSwatch>
                      <svg width="19" height="18" viewBox="0 0 19 18" fill="none"><path d="M18 1 L1 8 L18 16" stroke="#3e66d0" strokeWidth="1.500" /></svg>
                    </LegendSwatch>
                    <LegendName>Ríos</LegendName>
                    <Check><CheckMark /></Check>
                  </LegendRow>
                  <LegendRow>
                    <LegendSwatch>
                      <svg width="10" height="10" viewBox="0 0 10 10"><rect width="10" height="10" fill="#d01c24" /></svg>
                    </LegendSwatch>
                    <LegendName>Estaciones</LegendName>
                    <Check><CheckMark /></Check>
                  </LegendRow>
                  <FieldLabel $mt={14}>Zoom a la Provincia:</FieldLabel>
                  <FakeSelect $mt={6}>Seleccione prov...<SelectCaret /></FakeSelect>
                  <FieldLabel $mt={17}>Zoom a la Cuenca:</FieldLabel>
                  <FakeSelect $mt={6}>Seleccione cue...<SelectCaret /></FakeSelect>
                  <FieldLabel $mt={16}>Zoom a la Unidad Hidrográfica Nivel 3:</FieldLabel>
                  <FakeSelect $mt={6}>Seleccione sub...<SelectCaret /></FakeSelect>
                  <FieldLabel $mt={-1}>Búsqueda de Estación:</FieldLabel>
                  <StationInput>H0890</StationInput>
                  <SearchBar><FaSearch size={14} /></SearchBar>
                </Legend>
              </MapArea>
              <AppFooter />
              <Backdrop />
              <Modal>
                <ModalTop />
                <ModalBody>
                  <NavTabs>
                    <NavTab>Hydrographs</NavTab>
                    <NavTab>Visual Analysis</NavTab>
                    <NavTab $active>Metrics Report</NavTab>
                    <NavTab>Forecast</NavTab>
                  </NavTabs>
                  <TabPanel>
                    <Rule $mt={32} />
                    <TableTitle>Table</TableTitle>
                    <Rule $mt={0} />
                    <SubTitle>Select the Metrics to Include in the Report:</SubTitle>
                    <DocsLink>[Docs]</DocsLink>
                    <MultiInput><TextCaret /></MultiInput>
                    <ListBox>
                      <Options>
                        <OptionRow>Mean Error</OptionRow>
                        <OptionRow $hl>Mean Absolute Error</OptionRow>
                        <OptionRow>Mean Squared Error</OptionRow>
                        <OptionRow>Mean Log Error</OptionRow>
                        <OptionRow>Mean Absolute Log Error</OptionRow>
                        <OptionRow>Mean Squared Log Error</OptionRow>
                      </Options>
                      <ScrollTrack $w={15}>
                        <ArrowUp $mt={5} />
                        <Thumb $w={11} $h={30} $mt={5} />
                        <ArrowDown $mb={5} />
                      </ScrollTrack>
                    </ListBox>
                    <Metrics>
                      <colgroup><col width={492} /><col /></colgroup>
                      <thead><tr><HeadCell /><HeadCell>Full Time Series</HeadCell></tr></thead>
                      <tbody>
                        <Row $odd><LabelCell>ME</LabelCell><ValueCell>-0.04</ValueCell></Row>
                        <Row><LabelCell>RMSE</LabelCell><ValueCell>0.80</ValueCell></Row>
                        <Row $odd><LabelCell>NRMSE (Mean)</LabelCell><ValueCell>0.43</ValueCell></Row>
                      </tbody>
                    </Metrics>
                  </TabPanel>
                </ModalBody>
              </Modal>
            </Page>
            <ScrollTrack $w={16}>
              <ArrowUp $mt={4} />
              <Thumb $w={11} $h={251} $mt={182} />
              <ArrowDown $mb={5} />
            </ScrollTrack>
          </Viewport>
          <DownloadBar>
            {[14, 13, 12, 11, 10].map(n => (
              <DownloadItem key={n}>
                <FileIcon />
                <FileName>newplot ({n}).png</FileName>
                <DownloadChevron><ChevronUp size={17} strokeWidth={1.800} color="#777" /></DownloadChevron>
              </DownloadItem>
            ))}
            <ShowAll>Show all</ShowAll>
            <BarClose><X size={17} strokeWidth={2} color="#5f6368" /></BarClose>
          </DownloadBar>
        </Window>
      </Desk>
    </Screen>
  );
}
